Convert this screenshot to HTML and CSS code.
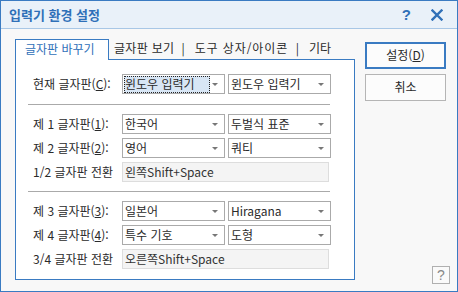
FILE: index.html
```html
<!DOCTYPE html>
<html lang="ko">
<head>
<meta charset="utf-8">
<title>입력기 환경 설정</title>
<link rel="stylesheet" href="styles.css">
</head>
<body>
<div class="window">
  <div class="titlebar">
    <span class="title">입력기 환경 설정</span>
    <span class="tb-btns">
      <span class="tb-help">?</span>
      <svg class="tb-close" width="12" height="12" viewBox="0 0 12 12"><path d="M1.5 1.5 L10.5 10.5 M10.5 1.5 L1.5 10.5" stroke="#2f70b8" stroke-width="2.4" stroke-linecap="square"/></svg>
    </span>
  </div>
  <div class="body">
    <div class="main">
      <div class="tabs">
        <div class="tab active">글자판 바꾸기</div>
        <div class="tab t2">글자판 보기</div>
        <span class="tab-sep">|</span>
        <div class="tab t3">도구 상자/아이콘</div>
        <span class="tab-sep">|</span>
        <div class="tab t4">기타</div>
      </div>
      <div class="panel">
        <div class="row">
          <span class="label">현재 글자판(<u>C</u>):</span>
          <div class="select"><span class="val focused">윈도우 입력기</span><span class="arrow"></span></div>
          <div class="select"><span class="val">윈도우 입력기</span><span class="arrow"></span></div>
        </div>
        <div class="hsep"></div>
        <div class="group">
          <div class="row">
            <span class="label">제 1 글자판(<u>1</u>):</span>
            <div class="select"><span class="val">한국어</span><span class="arrow"></span></div>
            <div class="select"><span class="val">두벌식 표준</span><span class="arrow"></span></div>
          </div>
          <div class="row">
            <span class="label">제 2 글자판(<u>2</u>):</span>
            <div class="select"><span class="val">영어</span><span class="arrow"></span></div>
            <div class="select"><span class="val">쿼티</span><span class="arrow"></span></div>
          </div>
          <div class="row">
            <span class="label">1/2 글자판 전환</span>
            <div class="field">왼쪽Shift+Space</div>
          </div>
        </div>
        <div class="hsep"></div>
        <div class="group">
          <div class="row">
            <span class="label">제 3 글자판(<u>3</u>):</span>
            <div class="select"><span class="val">일본어</span><span class="arrow"></span></div>
            <div class="select"><span class="val">Hiragana</span><span class="arrow"></span></div>
          </div>
          <div class="row">
            <span class="label">제 4 글자판(<u>4</u>):</span>
            <div class="select"><span class="val">특수 기호</span><span class="arrow"></span></div>
            <div class="select"><span class="val">도형</span><span class="arrow"></span></div>
          </div>
          <div class="row">
            <span class="label">3/4 글자판 전환</span>
            <div class="field">오른쪽Shift+Space</div>
          </div>
        </div>
      </div>
    </div>
    <div class="side">
      <div class="btn primary">설정(<u>D</u>)</div>
      <div class="btn">취소</div>
      <div class="help">?</div>
    </div>
  </div>
</div>
</body>
</html>
```

FILE: styles.css
```css
* { box-sizing: border-box; }
html, body { margin: 0; padding: 0; }
body {
  width: 458px;
  height: 292px;
  font-family: "Noto Sans CJK KR", "Noto Sans", sans-serif;
  font-size: 12px;
  font-weight: 400;
  color: #2a2a2a;
  background: #fff;
}
.window {
  width: 458px;
  height: 292px;
  border: 1px solid #3a7bc2;
  display: flex;
  flex-direction: column;
  background: #f8f8f8;
}
.titlebar {
  height: 28px;
  flex: none;
  background: #e9f1f9;
  border-bottom: 1px solid #a8c7e6;
  display: flex;
  align-items: center;
  padding: 0 0 0 8px;
}
.title {
  font-size: 13px;
  font-weight: bold;
  color: #2f70b8;
  line-height: 16px;
  flex: 1;
}
.tb-btns {
  display: flex;
  align-items: center;
  margin-right: 14px;
}
.tb-help {
  font-family: "Liberation Sans", sans-serif;
  font-weight: bold;
  font-size: 15px;
  color: #2f70b8;
  margin-right: 20px;
  line-height: 16px;
}
.tb-close { display: block; }
.body {
  flex: 1;
  display: flex;
  padding: 10px 0 0 14px;
}
.main {
  width: 340px;
  display: flex;
  flex-direction: column;
}
.tabs {
  height: 20px;
  display: flex;
  align-items: flex-start;
}
.tab {
  height: 20px;
  line-height: 18px;
  color: #2a2a2a;
  white-space: nowrap;
}
.tab.t2 { padding-left: 5px; letter-spacing: 0.3px; }
.tab.t3 { margin-left: 10px; width: 94px; letter-spacing: 0.9px; }
.tab.t4 { margin-left: 10px; }
.tab.active {
  height: 21px;
  padding: 0 8px 0 9px;
  width: 94px;
  background: #fff;
  border: 1px solid #3a7bc2;
  border-bottom: none;
  color: #2f70b8;
  position: relative;
  z-index: 1;
}
.tab-sep {
  line-height: 18px;
  color: #2a2a2a;
  margin-left: 7px;
}
.panel {
  height: 221px;
  border: 1px solid #3a7bc2;
  background: #fff;
  padding: 14px 0 0 17px;
  display: flex;
  flex-direction: column;
}
.group {
  display: flex;
  flex-direction: column;
  gap: 4px;
}
.row {
  height: 20px;
  display: flex;
  align-items: center;
}
.label {
  width: 89px;
  flex: none;
  line-height: 18px;
  color: #2a2a2a;
  white-space: nowrap;
}
.select {
  width: 103px;
  height: 20px;
  border: 1px solid #aaa;
  background: #fff;
  display: flex;
  align-items: center;
  margin-right: 3px;
  padding: 0 4px 0 1px;
}
.val {
  flex: 1;
  line-height: 16px;
  height: 17px;
  padding-left: 1px;
  white-space: nowrap;
}
.val.focused {
  flex: none;
  width: 86px;
  background: #d8e6f5;
  outline: 1px dotted #222;
  outline-offset: -1px;
}
.arrow {
  margin-left: auto;
  width: 0;
  height: 0;
  border-left: 3px solid transparent;
  border-right: 3px solid transparent;
  border-top: 3px solid #777;
  margin-right: 2px;
}
.field {
  width: 207px;
  height: 20px;
  border: 1px solid #ddd;
  background: #f4f4f4;
  line-height: 18px;
  padding-left: 2px;
  color: #333;
}
.hsep {
  height: 1px;
  background: #aaa;
  width: 302px;
  margin: 10px 0 9px -5px;
}
.group + .hsep { margin-top: 9px; }
.side {
  width: 85px;
  margin-left: 10px;
  display: flex;
  flex-direction: column;
  padding: 3px 0 7px 0;
}
.btn {
  width: 81px;
  height: 27px;
  border: 1px solid #b5b5b5;
  background: #fcfcfc;
  text-align: center;
  line-height: 24px;
  font-size: 12px;
  color: #2a2a2a;
  margin-bottom: 5px;
}
.btn.primary {
  border: 2px solid #3a7bc2;
  line-height: 22px;
}
.help {
  margin-top: auto;
  align-self: flex-end;
  width: 18px;
  height: 18px;
  border: 1px solid #b0b0b0;
  background: #fafafa;
  text-align: center;
  font-family: "Liberation Sans", sans-serif;
  font-size: 14px;
  font-weight: normal;
  line-height: 16px;
  color: #888;
}
```
